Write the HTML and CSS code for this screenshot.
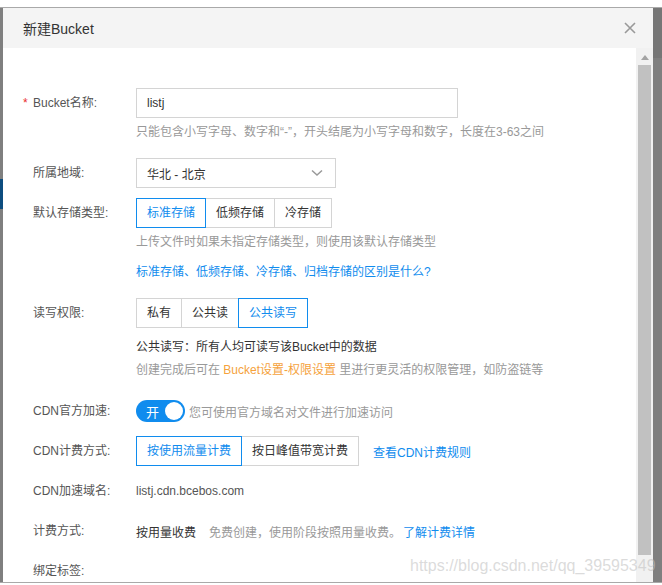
FILE: index.html
```html
<!DOCTYPE html>
<html lang="zh-CN">
  <head>
    <meta charset="UTF-8" />
    <meta name="viewport" content="width=device-width, initial-scale=1.0" />
    <title>新建Bucket</title>
    <link rel="stylesheet" href="styles.css">
  </head>
  <body>
    <div class="top-strip"></div>

    <div class="stage">
      <div class="backdrop backdrop-left">
        <div class="behind-block"></div>
      </div>

      <div class="dialog">
        <div class="dialog-head">
          <span class="dialog-title">新建Bucket</span>
          <svg class="close" width="12" height="12" viewBox="0 0 12 12">
            <path d="M1 1 L11 11 M11 1 L1 11" stroke="#999" stroke-width="1.6" fill="none" />
          </svg>
        </div>

        <div class="dialog-body">
          <div class="form">
            <!-- 名称 -->
            <div class="row gap-lg">
              <div class="label"><span class="star">*</span>Bucket名称:</div>
              <div class="field">
                <div class="input">listj</div>
                <div class="hint">只能包含小写字母、数字和“-”，开头结尾为小写字母和数字，长度在3-63之间</div>
              </div>
            </div>

            <!-- 地域 -->
            <div class="row">
              <div class="label">所属地域:</div>
              <div class="field">
                <div class="select">
                  <span>华北 - 北京</span>
                  <svg width="12" height="8" viewBox="0 0 12 8">
                    <path d="M1 1.5 L6 6 L11 1.5" stroke="#999" stroke-width="1.5" fill="none" />
                  </svg>
                </div>
              </div>
            </div>

            <!-- 存储类型 -->
            <div class="row gap-lg">
              <div class="label">默认存储类型:</div>
              <div class="field">
                <div class="btn-group">
                  <span class="opt active">标准存储</span>
                  <span class="opt">低频存储</span>
                  <span class="opt">冷存储</span>
                </div>
                <div class="hint">上传文件时如果未指定存储类型，则使用该默认存储类型</div>
                <div class="link link-line">标准存储、低频存储、冷存储、归档存储的区别是什么?</div>
              </div>
            </div>

            <!-- 读写权限 -->
            <div class="row gap-lg">
              <div class="label">读写权限:</div>
              <div class="field">
                <div class="btn-group">
                  <span class="opt">私有</span>
                  <span class="opt">公共读</span>
                  <span class="opt active">公共读写</span>
                </div>
                <div class="note">公共读写：所有人均可读写该Bucket中的数据</div>
                <div class="hint">创建完成后可在 <span class="orange">Bucket设置-权限设置</span> 里进行更灵活的权限管理，如防盗链等</div>
              </div>
            </div>

            <!-- CDN -->
            <div class="row">
              <div class="label">CDN官方加速:</div>
              <div class="field inline">
                <div class="switch">
                  <span class="switch-text">开</span>
                  <span class="knob"></span>
                </div>
                <span class="hint-inline">您可使用官方域名对文件进行加速访问</span>
              </div>
            </div>

            <div class="row">
              <div class="label">CDN计费方式:</div>
              <div class="field inline">
                <div class="btn-group">
                  <span class="opt active">按使用流量计费</span>
                  <span class="opt">按日峰值带宽计费</span>
                </div>
                <span class="link rule-link">查看CDN计费规则</span>
              </div>
            </div>

            <div class="row">
              <div class="label">CDN加速域名:</div>
              <div class="field inline">
                <span class="value">listj.cdn.bcebos.com</span>
              </div>
            </div>

            <div class="row">
              <div class="label">计费方式:</div>
              <div class="field inline">
                <span class="value dark">按用量收费</span>
                <span class="hint-inline free">免费创建，使用阶段按照用量收费。</span>
                <span class="link">了解计费详情</span>
              </div>
            </div>

            <div class="row">
              <div class="label">绑定标签:</div>
            </div>
          </div>

          <div class="scrollbar">
            <svg class="arrow" width="8" height="5" viewBox="0 0 8 5">
              <path d="M0 5 L4 0 L8 5 Z" fill="#a3a3a3" />
            </svg>
            <div class="thumb"></div>
          </div>
        </div>
      </div>

      <div class="backdrop backdrop-right">
        <div class="right-top"></div>
      </div>
    </div>

    <div class="watermark">https://blog.csdn.net/qq_39595349</div>
  </body>
</html>
```

FILE: styles.css
```css
body {
  margin: 0;
  width: 662px;
  height: 585px;
  overflow: hidden;
  position: relative;
  background: #fff;
  font-family: "Liberation Sans", "Noto Sans CJK SC", sans-serif;
  font-size: 12px;
  color: #333;
}

.top-strip {
  height: 7px;
  background: #fff;
  border-bottom: 1px solid #a9a9a9;
}

.stage {
  display: flex;
  height: 574px;
  border-bottom: 1px solid #a9a9a9;
}

.backdrop {
  background: #7f7f7f;
}

.backdrop-left {
  width: 3px;
  padding-top: 171px;
}

.behind-block {
  height: 30px;
  background: #0d4d7f;
}

.backdrop-right {
  width: 9px;
}

.right-top {
  height: 50px;
  background: #767676;
}

.dialog {
  flex: 1;
  display: flex;
  flex-direction: column;
  background: #fff;
}

.dialog-head {
  height: 40px;
  flex-shrink: 0;
  background: #f4f4f4;
  display: flex;
  align-items: center;
  justify-content: space-between;
  padding: 0 17px 0 20px;
}

.dialog-title {
  font-size: 14px;
  color: #333;
}

.dialog-body {
  flex: 1;
  display: flex;
  min-height: 0;
}

.form {
  flex: 1;
  padding: 40px 0 0 20px;
  overflow: hidden;
}

.row {
  display: flex;
  margin-bottom: 10px;
}

.row.gap-lg {
  margin-bottom: 17px;
}

.label {
  width: 113px;
  flex-shrink: 0;
  line-height: 30px;
  color: #555;
  white-space: nowrap;
  padding-left: 10px;
  box-sizing: border-box;
  position: relative;
}

.star {
  position: absolute;
  left: 0;
  color: #ea2e2e;
}

.field.inline {
  display: flex;
  align-items: center;
  height: 30px;
}

.input {
  width: 322px;
  height: 30px;
  box-sizing: border-box;
  border: 1px solid #d4d4d4;
  padding: 0 10px;
  line-height: 28px;
  color: #333;
}

.hint {
  color: #999;
  line-height: 18px;
  margin-top: 5px;
  white-space: nowrap;
}

.select {
  width: 200px;
  height: 30px;
  box-sizing: border-box;
  border: 1px solid #d4d4d4;
  padding: 0 12px 0 10px;
  display: flex;
  align-items: center;
  justify-content: space-between;
}

.btn-group {
  display: flex;
}

.opt {
  height: 30px;
  line-height: 28px;
  box-sizing: border-box;
  padding: 0 10px;
  border: 1px solid #d4d4d4;
  margin-right: -1px;
  color: #333;
  background: #fff;
  white-space: nowrap;
}

.opt.active {
  border-color: #108cee;
  color: #108cee;
  position: relative;
  z-index: 1;
}

.link {
  color: #108cee;
  white-space: nowrap;
}

.link-line {
  line-height: 18px;
  margin-top: 12px;
}

.note {
  color: #333;
  line-height: 18px;
  margin-top: 10px;
}

.orange {
  color: #f5a23c;
}

.switch {
  width: 49px;
  height: 22px;
  border-radius: 11px;
  background: #108cee;
  display: flex;
  align-items: center;
  justify-content: space-between;
  padding: 0 2px 0 10px;
  box-sizing: border-box;
}

.switch-text {
  color: #fff;
  font-size: 13px;
}

.knob {
  width: 18px;
  height: 18px;
  border-radius: 50%;
  background: #fff;
}

.hint-inline {
  color: #999;
  margin-left: 4px;
  white-space: nowrap;
}

.hint-inline.free {
  margin-left: 13px;
  margin-right: 2px;
}

.rule-link {
  margin-left: 15px;
}

.value {
  color: #555;
}

.value.dark {
  color: #333;
}

/* 截图水印 */
.watermark {
  position: absolute;
  left: 410px;
  top: 556px;
  font-size: 16px;
  line-height: 20px;
  color: rgba(195, 195, 195, 0.6);
  white-space: nowrap;
  pointer-events: none;
}

.scrollbar {
  width: 17px;
  flex-shrink: 0;
  background: #f1f1f1;
  display: flex;
  flex-direction: column;
  align-items: center;
  padding-top: 7px;
  box-sizing: border-box;
}

.arrow {
  display: block;
}

.thumb {
  margin-top: 5px;
  width: 13px;
  height: 490px;
  background: #c1c1c1;
}
```
